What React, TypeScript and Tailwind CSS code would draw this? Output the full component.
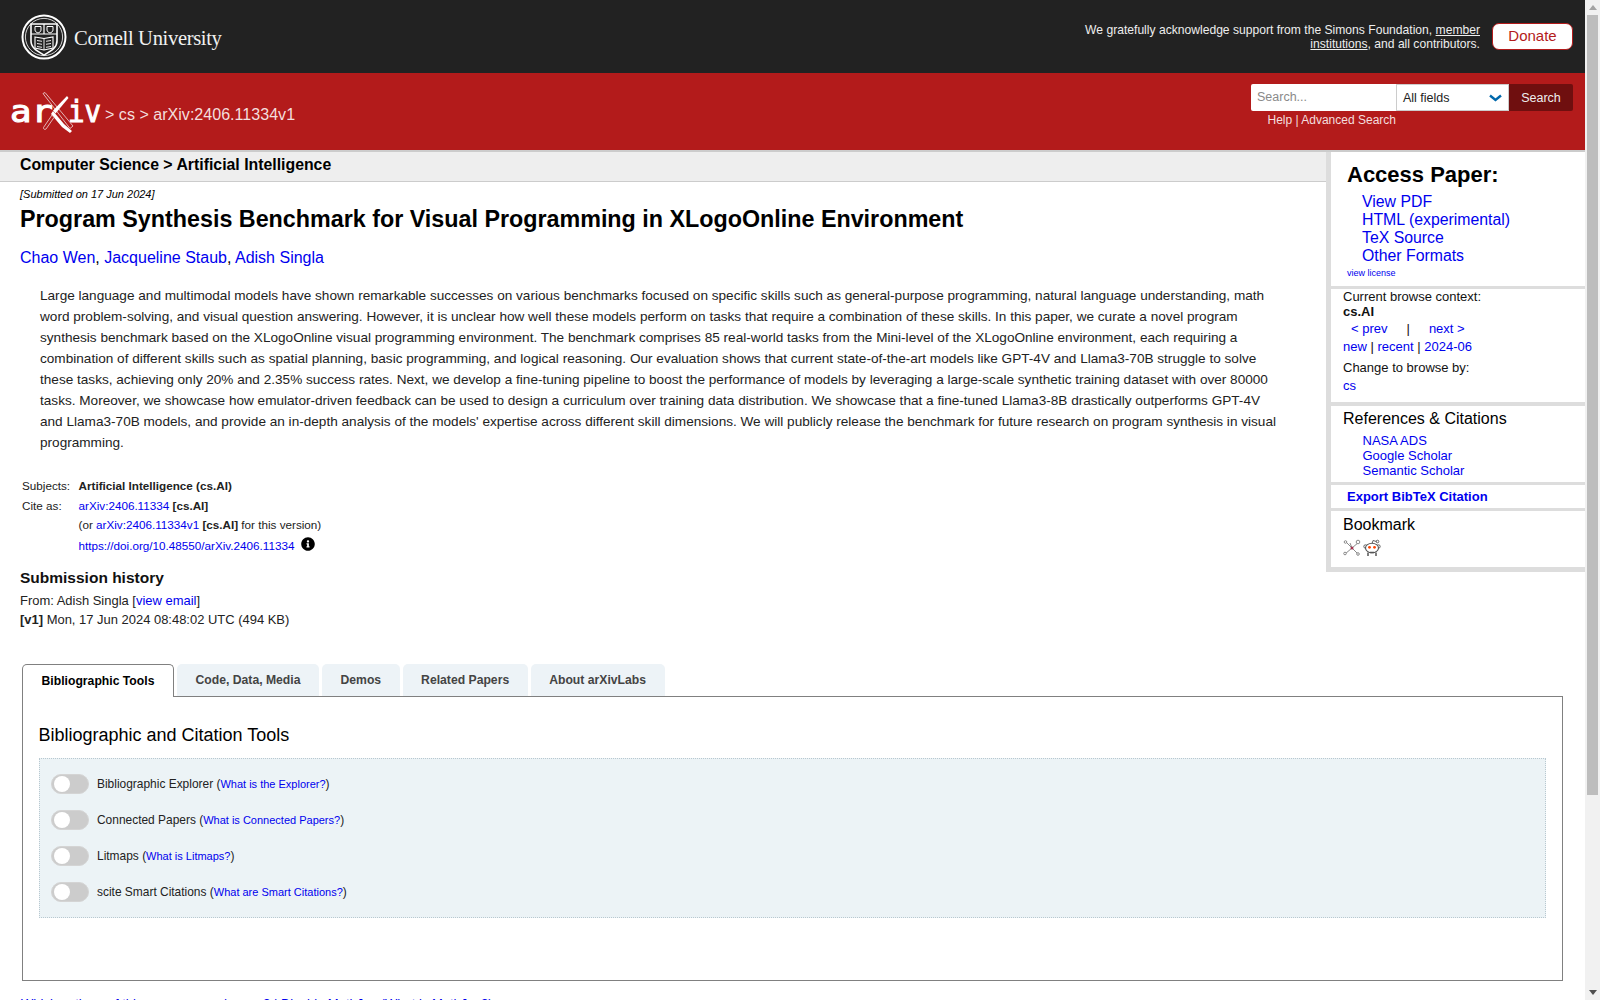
import { FaInfoCircle } from 'react-icons/fa'

const link = 'text-[#0000ee]'

function CornellSeal() {
  return (
    <svg width="46" height="46" viewBox="0 0 46 46" fill="none" stroke="#fff">
      <circle cx="23" cy="23" r="21.5" strokeWidth="2" />
      <circle cx="23" cy="23" r="18.6" strokeWidth="0.8" />
      <path d="M10 10h26v17c0 7-6 10-13 14c-7-4-13-7-13-14z" strokeWidth="1.6" />
      <path d="M10 20h26M23 10v10" strokeWidth="1.2" />
      <path d="M14 12.500h6v3.500c0 1.500-1.500 2.500-3 3c-1.500-.5-3-1.500-3-3z" strokeWidth="1" />
      <path d="M26 12.500h6v3.500c0 1.500-1.500 2.500-3 3c-1.500-.5-3-1.500-3-3z" strokeWidth="1" />
      <path d="M14 23l9 1.500l9-1.500v11l-9 2l-9-2z" strokeWidth="1.100" />
      <path d="M23 24.500v11.500M16 26.500l5 .8M16 29.500l5 .8M16 32.500l5 .8M30 26.500l-5 .8M30 29.500l-5 .8M30 32.500l-5 .8" strokeWidth="0.9" />
    </svg>
  )
}

function ArxivLogo() {
  return (
    <svg width="92" height="42" viewBox="0 0 92 42" className="block">
      <text x="0" y="30" fontFamily="'DejaVu Sans Mono', monospace" fontSize="30" fill="#fff" stroke="#fff" strokeWidth="1" textLength="43" lengthAdjust="spacingAndGlyphs">ar</text>
      <text x="58" y="30" fontFamily="'DejaVu Sans Mono', monospace" fontSize="30" fill="#fff" stroke="#fff" strokeWidth="1" textLength="33" lengthAdjust="spacingAndGlyphs">iv</text>
      <path d="M33 1.500l2-1l28 33.500l-3 2.500z" fill="#b31b1b" stroke="#e8c8c8" strokeWidth="0.9" />
      <path d="M43 19l11 13l8 7l-2 2l-8-6l-11-13z" fill="#fff" />
      <path d="M57 4l1.500 2l-13 15.500l-2.500-3z" fill="#fff" />
      <path d="M42 23l2 2.500l-8 11.500c-1 1-3 0-2.500-1.500z" fill="#b31b1b" stroke="#e8c8c8" strokeWidth="0.9" />
    </svg>
  )
}

function SciencewiseIcon() {
  return (
    <svg width="18" height="18" viewBox="0 0 18 18" fill="none" stroke="#8a8a8a" strokeWidth="1">
      <path d="M2 2l7 7l-7 6M9 9l6 6M9 9l7-6M9 9l-2-5" />
      <circle cx="2.500" cy="3" r="1.300" fill="#fff" />
      <circle cx="2" cy="14.500" r="1.300" fill="#fff" />
      <circle cx="15" cy="15" r="1.300" fill="#fff" />
      <circle cx="15" cy="3" r="1.800" fill="#fff" />
      <circle cx="9" cy="9" r="1.500" fill="#a3344f" stroke="none" />
    </svg>
  )
}

function RedditIcon() {
  return (
    <svg width="18" height="18" viewBox="0 0 18 18" fill="none" stroke="#555" strokeWidth="1.100">
      <path d="M9 5l1-3.500l3.500 1" strokeWidth="0.9" />
      <circle cx="14.500" cy="2.500" r="1.300" strokeWidth="0.9" />
      <circle cx="2.500" cy="7.500" r="1.700" fill="#fff" strokeWidth="0.9" />
      <circle cx="15.500" cy="7.500" r="1.700" fill="#fff" strokeWidth="0.9" />
      <ellipse cx="9" cy="9" rx="6.500" ry="4.800" fill="#fff" />
      <path d="M5 13.500v3.500M13 13.500v3.500M7 13.500h4" strokeWidth="1.500" />
      <circle cx="6.500" cy="8.300" r="1.400" fill="#ff4500" stroke="none" />
      <circle cx="11.500" cy="8.300" r="1.400" fill="#ff4500" stroke="none" />
    </svg>
  )
}

function TopBar() {
  return (
    <div className="flex h-[73px] items-center justify-between bg-[#222222] pl-[21px] pr-[12px]">
      <div className="flex items-center gap-[7px]">
        <CornellSeal />
        <span className="pt-[3px] font-['Liberation_Serif',serif] text-[20.600px] tracking-[-0.35px] text-[#f1f1f1]">Cornell University</span>
      </div>
      <div className="flex items-center gap-[12px]">
        <p className="w-[400px] text-right text-[12.120px] leading-[14px] text-[#eeeeee]">
          We gratefully acknowledge support from the Simons Foundation, <span className="underline">member institutions</span>, and all contributors.
        </p>
        <button className="h-[27px] w-[81px] rounded-[7px] border border-[#b31b1b] bg-white text-[15px] text-[#b31b1b]">Donate</button>
      </div>
    </div>
  )
}

function RedBar() {
  return (
    <div className="flex h-[77px] justify-between bg-[#b31b1b] pr-[12px]">
      <div className="flex items-center pl-[10px] pt-[2px]">
        <ArxivLogo />
        <span className="ml-[3px] pt-[4px] text-[16.080px] text-[#f3dede]">&gt; cs &gt; arXiv:2406.11334v1</span>
      </div>
      <div className="pt-[11px]">
        <div className="flex h-[27px] w-[322px] text-[12.500px]">
          <div className="flex w-[145px] items-center rounded-l-[2px] bg-white pl-[6px] text-[#8a8a8a]">Search...</div>
          <div className="flex w-[113px] items-center justify-between border border-[#cccccc] bg-white pl-[6px] pr-[6px] pt-[1px] text-[#222222]">
            All fields
            <svg width="13" height="8" viewBox="0 0 13 8" fill="none" stroke="#0068ac" strokeWidth="2.400">
              <path d="M1 1.500l5.500 4.500l5.500-4.500" />
            </svg>
          </div>
          <div className="flex w-[64px] items-center justify-center rounded-r-[2px] bg-[#6f0f0f] pt-[2px] text-[#eeeeee]">Search</div>
        </div>
        <p className="mt-[2px] w-[145px] text-right text-[12px] leading-[14px] text-[#f3dede]">Help | Advanced Search</p>
      </div>
    </div>
  )
}

function Sidebar() {
  return (
    <aside className="w-[259px] shrink-0 self-start border-b-[5px] border-l-[5px] border-[#dddddd] bg-white text-[13px] text-[#111111]">
      <div className="h-[137px] border-b-[3px] border-[#dddddd] pl-[16px] pt-[6px]">
        <h2 className="text-[22px] font-bold leading-[34px] text-black">Access Paper:</h2>
        <ul className={`mt-[1px] pl-[15px] text-[15.840px] leading-[18px] ${link}`}>
          <li>View PDF</li>
          <li>HTML (experimental)</li>
          <li>TeX Source</li>
          <li>Other Formats</li>
        </ul>
        <p className={`mt-[2px] text-[9px] leading-[12px] ${link}`}>view license</p>
      </div>
      <div className="h-[117px] border-b-[4px] border-[#dddddd] pl-[12px] pt-[1px] leading-[17px]">
        <p className="leading-[14px]">Current browse context:</p>
        <p className="font-bold leading-[15px]">cs.AI</p>
        <p className="flex h-[18px] items-center pl-[8px]">
          <span className={link}>&lt; prev</span>
          <span className="ml-[19px]">|</span>
          <span className={`ml-[19px] ${link}`}>next &gt;</span>
        </p>
        <p className="mt-[1px] h-[18px]">
          <span className={link}>new</span> | <span className={link}>recent</span> | <span className={link}>2024-06</span>
        </p>
        <p className="mt-[3px]">Change to browse by:</p>
        <p className={`mt-[1px] ${link}`}>cs</p>
      </div>
      <div className="h-[79px] border-b-[3px] border-[#dddddd] pl-[12px] pt-[1px]">
        <h3 className="text-[16px] leading-[24px] text-black">References &amp; Citations</h3>
        <ul className={`mt-[2px] pl-[19.500px] text-[13px] leading-[15px] ${link}`}>
          <li>NASA ADS</li>
          <li>Google Scholar</li>
          <li>Semantic Scholar</li>
        </ul>
      </div>
      <div className="h-[26px] border-b-[3px] border-[#dddddd] pl-[16px] pt-[2px]">
        <span className={`font-bold leading-[16px] ${link}`}>Export BibTeX Citation</span>
      </div>
      <div className="h-[56px] pl-[12px] pt-[2px]">
        <h3 className="text-[16px] leading-[24px] text-black">Bookmark</h3>
        <div className="mt-[2px] flex gap-[2px]">
          <SciencewiseIcon />
          <RedditIcon />
        </div>
      </div>
    </aside>
  )
}

function Article() {
  return (
    <div className="min-w-0 flex-1">
      <div className="h-[30px] border-b border-[#cccccc] bg-[#eeeeee] pl-[20px] text-[15.840px] font-bold leading-[25px] text-black">
        Computer Science &gt; Artificial Intelligence
      </div>
      <div className="pl-[20px] pr-[30px]">
        <p className="mt-[5px] text-[11px] italic leading-[14px] text-black">[Submitted on 17 Jun 2024]</p>
        <h1 className="mt-[3px] text-[23.300px] font-bold leading-[30px] text-black">
          Program Synthesis Benchmark for Visual Programming in XLogoOnline Environment
        </h1>
        <p className={`mt-[12px] text-[16px] leading-[24px] ${link}`}>
          Chao Wen<span className="text-black">,</span> Jacqueline Staub<span className="text-black">,</span> Adish Singla
        </p>
        <p className="mt-[15px] pl-[20px] pr-[10px] text-[13.600px] leading-[21px] text-[#222222]">
          Large language and multimodal models have shown remarkable successes on various benchmarks focused on specific skills such as general-purpose programming, natural language understanding, math word problem-solving, and visual question answering. However, it is unclear how well these models perform on tasks that require a combination of these skills. In this paper, we curate a novel program synthesis benchmark based on the XLogoOnline visual programming environment. The benchmark comprises 85 real-world tasks from the Mini-level of the XLogoOnline environment, each requiring a combination of different skills such as spatial planning, basic programming, and logical reasoning. Our evaluation shows that current state-of-the-art models like GPT-4V and Llama3-70B struggle to solve these tasks, achieving only 20% and 2.35% success rates. Next, we develop a fine-tuning pipeline to boost the performance of models by leveraging a large-scale synthetic training dataset with over 80000 tasks. Moreover, we showcase how emulator-driven feedback can be used to design a curriculum over training data distribution. We showcase that a fine-tuned Llama3-8B drastically outperforms GPT-4V and Llama3-70B models, and provide an in-depth analysis of the models' expertise across different skill dimensions. We will publicly release the benchmark for future research on program synthesis in visual programming.
        </p>
        <div className="mt-[23px] grid grid-cols-[56.500px_1fr] pl-[2px] text-[11.700px] leading-[19.600px] text-[#222222]">
          <span>Subjects:</span>
          <span className="font-bold">Artificial Intelligence (cs.AI)</span>
          <span>Cite as:</span>
          <span>
            <span className={link}>arXiv:2406.11334</span> <b>[cs.AI]</b>
          </span>
          <span />
          <span>
            (or <span className={link}>arXiv:2406.11334v1</span> <b>[cs.AI]</b> for this version)
          </span>
          <span />
          <span className="flex items-center pt-[1px]">
            <span className={link}>https://doi.org/10.48550/arXiv.2406.11334</span>
            <FaInfoCircle className="mb-[4px] ml-[7px] text-[14px] text-black" />
          </span>
        </div>
        <h2 className="mt-[13px] text-[15.500px] font-bold leading-[20px] text-[#111111]">Submission history</h2>
        <p className="mt-[3px] text-[12.960px] leading-[19px] text-[#222222]">
          From: Adish Singla [<span className={link}>view email</span>]
        </p>
        <p className="text-[12.960px] leading-[19px] text-[#222222]">
          <b>[v1]</b> Mon, 17 Jun 2024 08:48:02 UTC (494 KB)
        </p>
      </div>
    </div>
  )
}

const tabs = ['Code, Data, Media', 'Demos', 'Related Papers', 'About arXivLabs']

const tools = [
  { name: 'Bibliographic Explorer', help: 'What is the Explorer?' },
  { name: 'Connected Papers', help: 'What is Connected Papers?' },
  { name: 'Litmaps', help: 'What is Litmaps?' },
  { name: 'scite Smart Citations', help: 'What are Smart Citations?' },
]

function Toggle() {
  return (
    <div className="flex h-[20px] w-[38px] items-center rounded-full border border-[#d4d4d4] bg-[#cccccc] pl-[2px]">
      <div className="h-[16px] w-[16px] rounded-full bg-white" />
    </div>
  )
}

function Labs() {
  return (
    <div className="pl-[22px] pr-[22px]">
      <div className="relative z-10 flex h-[33px] gap-[3px] text-[12.200px] font-bold">
        <div className="flex h-[33px] w-[152px] items-center justify-center rounded-t-[5px] border border-b-0 border-[#808080] bg-white text-black">
          Bibliographic Tools
        </div>
        {tabs.map((t) => (
          <div key={t} className="flex h-[32px] items-center rounded-t-[5px] bg-[#edf3f7] px-[18.500px] text-[#444444]">
            {t}
          </div>
        ))}
      </div>
      <div className="-mt-px h-[285px] border border-[#808080] px-[16px] pt-[26px]">
        <h2 className="-ml-[0.500px] text-[18px] leading-[24px] text-black">Bibliographic and Citation Tools</h2>
        <div className="mt-[11px] h-[160px] border border-dotted border-[#b8c8d0] bg-[#ecf3f6] pl-[11px] pt-[15px]">
          {tools.map((t) => (
            <div key={t.name} className="mb-[16px] flex h-[20px] items-center gap-[8px] text-[11.950px] text-[#222222]">
              <Toggle />
              <span className="pt-[1px]">
                {t.name} (<span className={`text-[11px] ${link}`}>{t.help}</span>)
              </span>
            </div>
          ))}
        </div>
      </div>
      <p className={`-ml-[1px] mt-[14px] text-[13px] leading-[18px] ${link}`}>
        Which authors of this paper are endorsers? | Disable MathJax (What is MathJax?)
      </p>
    </div>
  )
}

function Scrollbar() {
  return (
    <div className="flex w-[15px] shrink-0 flex-col items-center bg-[#f1f1f1]">
      <div className="mt-[5px] h-0 w-0 border-x-[4px] border-b-[5px] border-x-transparent border-b-[#a3a3a3]" />
      <div className="mt-[5px] h-[780px] w-[11px] bg-[#bdbdbd]" />
      <div className="mt-[195px] h-0 w-0 border-x-[4px] border-t-[5px] border-x-transparent border-t-[#505050]" />
    </div>
  )
}

export default function App() {
  return (
    <div className="flex h-screen overflow-hidden bg-white font-['Liberation_Sans',Arial,sans-serif]">
      <div className="min-w-0 flex-1">
        <TopBar />
        <RedBar />
        <div className="flex h-[514px] border-t-[2px] border-[#cccccc]">
          <Article />
          <Sidebar />
        </div>
        <Labs />
      </div>
      <Scrollbar />
    </div>
  )
}
